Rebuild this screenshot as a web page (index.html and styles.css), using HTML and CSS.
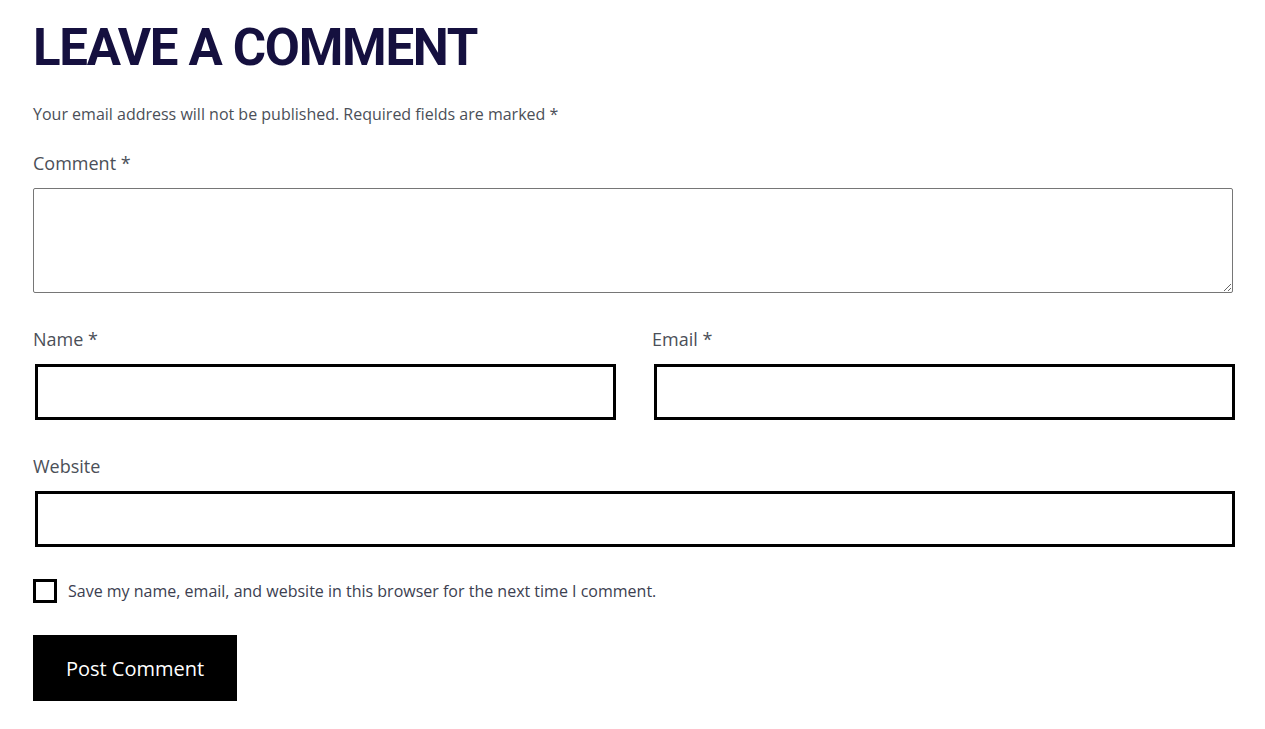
FILE: index.html
```html
<!DOCTYPE html>
<html lang="en">
<head>
    <meta charset="UTF-8">
    <meta name="viewport" content="width=device-width, initial-scale=1.0">
    <title>Leave a Comment</title>
    <link rel="stylesheet" href="styles.css">
</head>
<body>
    <div class="comment-respond">
        <h3 class="comment-title">LEAVE A COMMENT</h3>
        <form id="commentForm" class="comment-form">
            <p class="comment-notes">Your email address will not be published. Required fields are marked *</p>

            <div class="form-group comment-group">
                <label for="comment">Comment *</label>
                <textarea id="comment" rows="4" required></textarea>
            </div>

            <div class="form-row">
                <div class="form-group">
                    <label for="author">Name *</label>
                    <input type="text" id="author" class="field" required>
                </div>
                <div class="form-group">
                    <label for="email">Email *</label>
                    <input type="email" id="email" class="field" required>
                </div>
            </div>

            <div class="form-group url-group">
                <label for="url">Website</label>
                <input type="url" id="url" class="field">
            </div>

            <div class="cookies-consent">
                <input type="checkbox" id="cookies">
                <label for="cookies">Save my name, email, and website in this browser for the next time I comment.</label>
            </div>

            <button type="submit" class="btn-submit">Post Comment</button>
        </form>
    </div>
</body>
</html>
```

FILE: styles.css
```css
:root {
    --title-color: #15103f;
    --text-color: #4b4f58;
    --border-color: #000;
}

* {
    margin: 0;
    padding: 0;
    box-sizing: border-box;
}

body {
    font-family: "Open Sans", Arial, sans-serif;
    color: var(--text-color);
    background-color: #fff;
}

.comment-respond {
    width: 1200px;
    margin-left: 33px;
    padding-top: 19px;
}

.comment-title {
    font-family: Roboto, Arial, sans-serif;
    font-weight: 700;
    font-size: 51px;
    line-height: 58px;
    letter-spacing: -1.3px;
    color: var(--title-color);
}

.comment-notes {
    font-size: 16px;
    line-height: 24px;
    margin-top: 25px;
}

.form-group label {
    display: block;
    font-size: 18px;
    line-height: 26px;
    margin-bottom: 12px;
}

.comment-group {
    margin-top: 24px;
}

textarea {
    display: block;
    width: 100%;
    height: 105px;
    border: 1px solid #767676;
    border-radius: 2px;
    font-family: inherit;
    font-size: 16px;
}

.form-row {
    display: grid;
    grid-template-columns: 581px 581px;
    column-gap: 38px;
    margin-top: 33px;
}

.field {
    display: block;
    width: 100%;
    height: 56px;
    margin-left: 2px;
    border: 3px solid var(--border-color);
    font-family: inherit;
    font-size: 16px;
    padding: 0 12px;
}

.url-group {
    margin-top: 33px;
}

.cookies-consent {
    display: flex;
    align-items: center;
    gap: 11px;
    margin-top: 32px;
}

.cookies-consent input {
    appearance: none;
    width: 24px;
    height: 24px;
    border: 3px solid var(--border-color);
    background: #fff;
}

.cookies-consent label {
    font-size: 16px;
    line-height: 24px;
    color: #3c4050;
}

.btn-submit {
    display: block;
    margin-top: 32px;
    width: 204px;
    height: 66px;
    background-color: #000;
    color: #fff;
    border: none;
    font-family: "Open Sans", Arial, sans-serif;
    font-size: 20px;
    cursor: pointer;
}
```
